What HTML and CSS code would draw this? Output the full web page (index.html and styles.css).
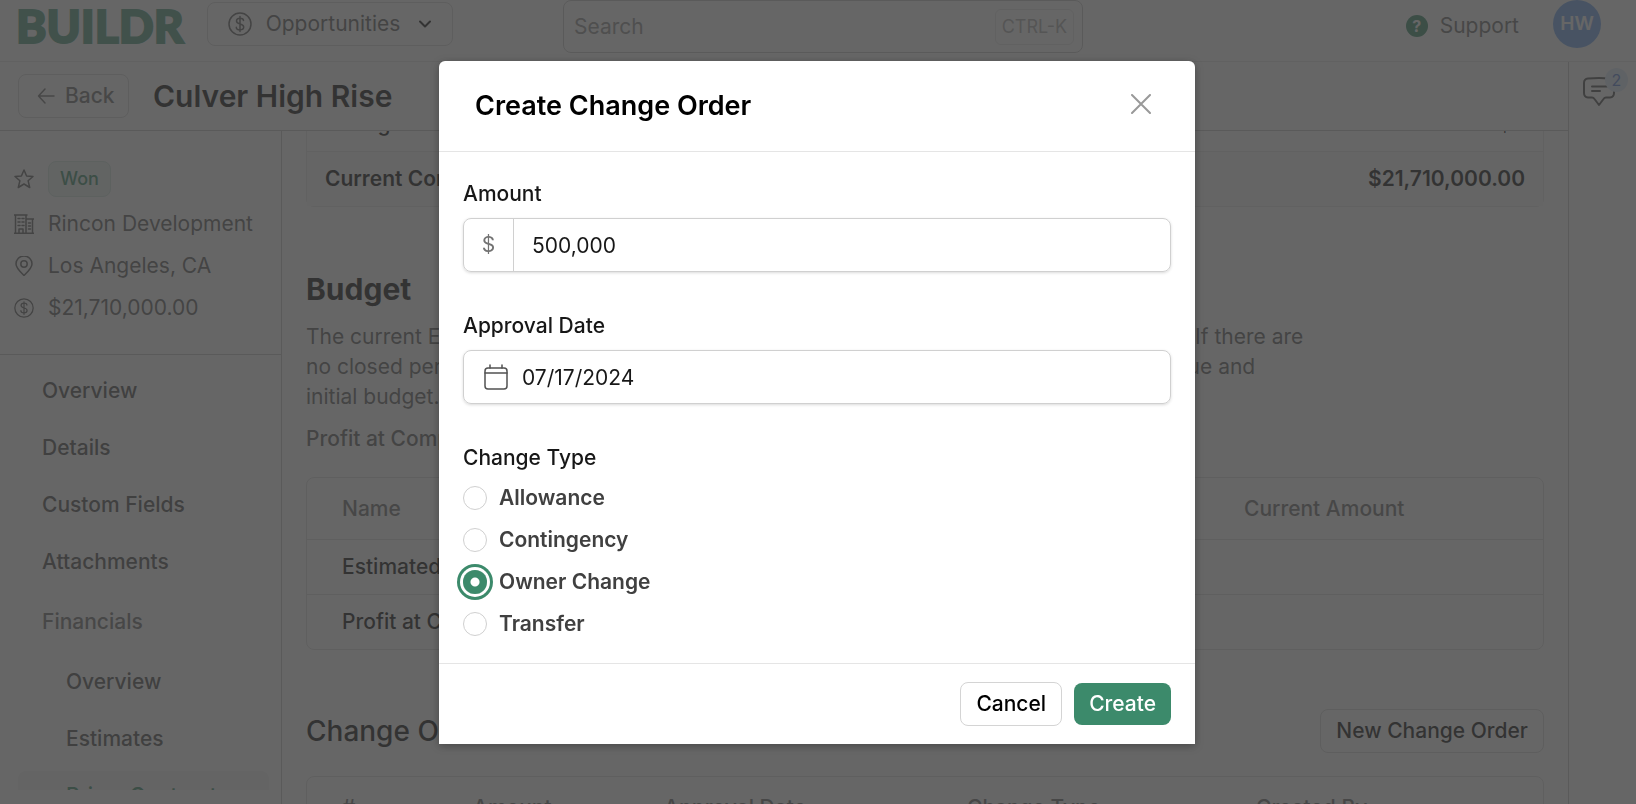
FILE: index.html
```
<!DOCTYPE html>
<html lang="en">
<head>
  <meta charset="UTF-8">
  <meta name="viewport" content="width=device-width, initial-scale=1.0">
  <title>Culver High Rise - Buildr</title>
  <link rel="stylesheet" href="styles.css">
</head>
<body>
  <div class="app">
    <header class="topbar">
      <a class="logo" href="#">BUILDR</a>
      <button class="btn switcher" type="button">
        <svg width="24" height="24" viewBox="0 0 24 24"><circle cx="12" cy="12" r="11"/><path d="M12 4.500v15M15.500 8.500c0-1.500-1.500-2.300-3.500-2.300s-3.500 1-3.500 2.800c0 4 7.200 2 7.200 6 0 1.800-1.500 2.800-3.700 2.800s-3.700-1-3.700-2.600"/></svg>
        Opportunities
        <svg class="chevron" width="14" height="14" viewBox="0 0 14 14"><path d="M2 4.500l5 5 5-5"/></svg>
      </button>
      <div class="search">
        <input type="text" placeholder="Search" aria-label="Search">
        <kbd>CTRL-K</kbd>
      </div>
      <a class="support" href="#"><span class="help">?</span>Support</a>
      <button class="avatar" type="button">HW</button>
    </header>

    <div class="below">
      <div class="page">
        <div class="titlebar">
          <button class="btn back" type="button">
            <svg width="18" height="18" viewBox="0 0 18 18"><path d="M17 9H1.500M8 2L1.500 9 8 16"/></svg>
            Back
          </button>
          <h1>Culver High Rise</h1>
        </div>

        <div class="columns">
          <aside class="sidebar">
            <ul class="info">
              <li class="status">
                <svg width="20" height="20" viewBox="0 0 20 20"><path d="M10 1l2.600 6 6.400.500-4.900 4.200 1.600 6.800L10 15l-5.700 3.500 1.600-6.800L1 7.500 7.400 7z"/></svg>
                <span class="pill">Won</span>
              </li>
              <li>
                <svg width="20" height="20" viewBox="0 0 20 20"><path d="M0 19.300h20M1.500 19V1M0 1h13M12 1v18M12 5h8M18.500 5v14M5 19v-4h4v4M4 4.500h2M8 4.500h2M4 8h2M8 8h2M4 11.500h2M8 11.500h2M14.500 9h2M14.500 12h2M14.500 15h2"/></svg>
                Rincon Development
              </li>
              <li>
                <svg width="20" height="20" viewBox="0 0 20 20"><path d="M10 19.500C6 15.500 2 12 2 8a8 8 0 0 1 16 0c0 4-4 7.500-8 11.500z"/><circle cx="10" cy="8" r="3.200"/></svg>
                Los Angeles, CA
              </li>
              <li>
                <svg width="20" height="20" viewBox="0 0 24 24"><circle cx="12" cy="12" r="11"/><path d="M12 4.500v15M15.500 8.500c0-1.500-1.500-2.300-3.500-2.300s-3.500 1-3.500 2.800c0 4 7.200 2 7.200 6 0 1.800-1.500 2.800-3.700 2.800s-3.700-1-3.700-2.600"/></svg>
                $21,710,000.00
              </li>
            </ul>
            <nav class="nav">
              <a href="#">Overview</a>
              <a href="#">Details</a>
              <a href="#">Custom Fields</a>
              <a href="#">Attachments</a>
              <span class="group">Financials</span>
              <a class="sub" href="#">Overview</a>
              <a class="sub" href="#">Estimates</a>
              <a class="sub active" href="#">Prime Contract</a>
            </nav>
          </aside>

          <main class="content">
            <table class="totals">
              <tr><td>Change Orders</td><td>$0</td></tr>
              <tr class="total"><td>Current Contract</td><td>$21,710,000.00</td></tr>
            </table>

            <h2>Budget</h2>
            <p class="text">The current Estimated Cost and Profit are both taken from the most recent closed period. If there are<br>
              no closed periods, the figures shown here are calculated from the original contract revenue and<br>
              initial budget.</p>
            <p class="note">Profit at Completion</p>

            <table class="grid budget">
              <thead>
                <tr><th>Name</th><th>Current Amount</th></tr>
              </thead>
              <tbody>
                <tr><td>Estimated Cost</td><td></td></tr>
                <tr><td>Profit at Completion</td><td></td></tr>
              </tbody>
            </table>

            <div class="section-head">
              <h3>Change Orders</h3>
              <button class="btn new-order" type="button">New Change Order</button>
            </div>

            <table class="grid orders">
              <thead>
                <tr><th>#</th><th>Amount</th><th>Approval Date</th><th>Change Type</th><th>Created By</th></tr>
              </thead>
            </table>
          </main>
        </div>
      </div>

      <aside class="rail">
        <button class="comments" type="button" aria-label="Comments">
          <svg width="32" height="30" viewBox="0 0 32 30"><path d="M5 1.500Q16 .500 27 1.500q4 .500 4 4.500v10q0 4-4 4.500h-4q-1.500 0-2.500 1.500L16 28l-4.500-6q-1-1.500-2.500-1.500H5q-4-.500-4-4.500V6q0-4 4-4.500zM9 9.500h15M9 14h8"/></svg>
          <span class="badge">2</span>
        </button>
      </aside>
    </div>
  </div>

  <div class="backdrop">
    <form class="modal" role="dialog" aria-labelledby="modal-title">
      <div class="modal-header">
        <h2 id="modal-title">Create Change Order</h2>
        <button class="close" type="button" aria-label="Close">
          <svg width="20" height="20" viewBox="0 0 20 20"><path d="M1 1l18 18M19 1L1 19"/></svg>
        </button>
      </div>

      <div class="modal-body">
        <div class="field">
          <label for="amount">Amount</label>
          <div class="input-group">
            <span class="prefix">$</span>
            <input id="amount" type="text" value="500,000">
          </div>
        </div>
        <div class="field">
          <label for="date">Approval Date</label>
          <div class="input-group date">
            <svg width="24" height="26" viewBox="0 0 24 26"><rect x="1" y="4" width="22" height="21" rx="3"/><path d="M1 9h22M6 1v3M18 1v3"/></svg>
            <input id="date" type="text" value="07/17/2024">
          </div>
        </div>
        <fieldset>
          <legend>Change Type</legend>
          <label><input type="radio" name="type"> Allowance</label>
          <label><input type="radio" name="type"> Contingency</label>
          <label><input type="radio" name="type" checked> Owner Change</label>
          <label><input type="radio" name="type"> Transfer</label>
        </fieldset>
      </div>

      <div class="modal-footer">
        <button class="btn cancel" type="button">Cancel</button>
        <button class="btn create" type="submit">Create</button>
      </div>
    </form>
  </div>
</body>
</html>
```
FILE: styles.css
```
* { box-sizing: border-box; }
body {
  margin: 0;
  font-family: Inter, "Liberation Sans", sans-serif;
  font-size: 21px;
  line-height: 30px;
  color: #000;
  background: #fff;
  overflow: hidden;
}
h1, h2, h3, p, ul, fieldset { margin: 0; padding: 0; }
button, input { font: inherit; color: inherit; }
button { cursor: pointer; }
a { color: inherit; text-decoration: none; }
svg {
  flex: none;
  fill: none;
  stroke: currentColor;
  stroke-width: 1.5;
  stroke-linecap: round;
  stroke-linejoin: round;
}
.app {
  display: flex;
  flex-direction: column;
  height: 100vh;
}
.btn {
  display: flex;
  align-items: center;
  justify-content: center;
  height: 44px;
  padding: 0 15px;
  border: 1px solid #d4d4d4;
  border-radius: 8px;
  background: #fff;
  font-weight: 500;
}

/* top bar */
.topbar {
  display: flex;
  flex: none;
  align-items: flex-start;
  height: 62px;
  padding: 0 35px 0 16px;
  border-bottom: 1px solid #e5e5e5;
  color: #555;
}
.logo {
  width: 191px;
  font-family: Lato, sans-serif;
  font-size: 46px;
  font-weight: 900;
  line-height: 52px;
  color: #469878;
  -webkit-text-stroke: 2px #469878;
}
.switcher {
  gap: 14px;
  width: 246px;
  margin-top: 2px;
  font-weight: 400;
}
.chevron {
  margin-left: 4px;
  color: #000;
  stroke-width: 2;
}
.search {
  display: flex;
  align-items: center;
  width: 520px;
  height: 53px;
  margin-left: 110px;
  padding: 0 8px 0 10px;
  border: 1px solid #c4c4c4;
  border-radius: 8px;
}
.search input {
  flex: 1;
  min-width: 0;
  padding: 0;
  border: 0;
  outline: 0;
}
.search input::placeholder { color: #8a8a8a; }
.search kbd {
  padding: 2px 6px;
  border: 1px solid #e5e5e5;
  border-radius: 6px;
  font-family: inherit;
  font-size: 18px;
  color: #aaa;
}
.support {
  display: flex;
  align-items: center;
  gap: 12px;
  height: 52px;
  margin-left: auto;
  color: #666;
}
.help {
  width: 22px;
  height: 22px;
  border-radius: 50%;
  background: #2f8562;
  color: #fff;
  font-size: 16px;
  font-weight: 700;
  line-height: 22px;
  text-align: center;
}
.avatar {
  width: 48px;
  height: 48px;
  margin-left: 34px;
  padding: 0;
  border: 0;
  border-radius: 50%;
  background: #6ba2f0;
  color: #fff;
  font-size: 19px;
  font-weight: 600;
}

/* page frame */
.below {
  display: flex;
  flex: 1;
  min-height: 0;
}
.page {
  display: flex;
  flex: 1;
  flex-direction: column;
  min-width: 0;
}
.titlebar {
  display: flex;
  flex: none;
  align-items: center;
  gap: 24px;
  height: 69px;
  padding: 0 18px;
  border-bottom: 1px solid #c4c4c4;
}
.titlebar h1 {
  font-size: 30px;
  font-weight: 600;
}
.back {
  gap: 10px;
  justify-content: flex-start;
  width: 111px;
  padding: 0 0 0 18px;
  color: #666;
}
.columns {
  display: flex;
  flex: 1;
  min-height: 0;
}
.rail {
  width: 68px;
  padding: 15px 14px;
  border-left: 1px solid #c4c4c4;
}
.comments {
  position: relative;
  padding: 0;
  border: 0;
  background: none;
  color: #444;
}
.comments svg {
  display: block;
  stroke-width: 2;
}
.badge {
  position: absolute;
  top: -9px;
  right: -13px;
  width: 23px;
  height: 24px;
  border-radius: 50%;
  background: #dbe8fb;
  color: #4c78d0;
  font-size: 16px;
  line-height: 24px;
}

/* sidebar */
.sidebar {
  display: flex;
  flex: none;
  flex-direction: column;
  width: 282px;
  padding-bottom: 14px;
  border-right: 1px solid #c4c4c4;
}
.info {
  flex: none;
  padding: 23px 14px 25px;
  border-bottom: 1px solid #c4c4c4;
  list-style: none;
  color: #555;
}
.info li {
  display: flex;
  align-items: center;
  gap: 14px;
  height: 42px;
  white-space: nowrap;
}
.info .status { height: 49px; }
.pill {
  padding: 2px 11px;
  border: 1px solid #cfe5dc;
  border-radius: 8px;
  background: #e8f3ef;
  color: #2f8562;
  font-size: 18px;
  font-weight: 500;
}
.nav {
  display: flex;
  flex-direction: column;
  gap: 8px;
  min-height: 0;
  padding: 11px 12px 0 18px;
  overflow: hidden;
  color: #444;
  font-weight: 500;
}
.nav > * {
  flex: none;
  height: 49px;
  padding-left: 24px;
  border-radius: 8px;
  line-height: 49px;
}
.nav .group {
  height: 55px;
  color: #666;
  line-height: 55px;
}
.nav .sub { padding-left: 48px; }
.nav .active {
  background: #f2f2f2;
  color: #2f8562;
}

/* content */
.content {
  flex: 1;
  min-width: 0;
  padding: 0 24px;
  overflow: hidden;
}
table {
  width: 100%;
  border-collapse: separate;
  border-spacing: 0;
}
.totals {
  height: 110px;
  margin-top: -36px;
  border: 1px solid #e5e5e5;
  border-radius: 8px;
}
.totals td {
  height: 55px;
  padding: 0 18px;
  font-weight: 500;
}
.totals td:last-child { text-align: right; }
.totals .total td {
  border-top: 1px solid #e5e5e5;
  background: #fafafa;
  font-weight: 600;
}
.content h2 {
  margin-top: 67px;
  font-size: 30px;
  font-weight: 700;
}
.text {
  margin-top: 18px;
  color: #555;
  white-space: nowrap;
}
.note {
  margin-top: 12px;
  color: #555;
  font-weight: 500;
}
.grid {
  border: 1px solid #dcdcdc;
  border-radius: 8px;
  table-layout: fixed;
}
.grid th, .grid td {
  height: 55px;
  padding: 0 0 0 35px;
  font-weight: 500;
  text-align: left;
}
.grid th {
  height: 61px;
  color: #666;
}
.grid td { border-top: 1px solid #dcdcdc; }
.budget { margin-top: 23px; }
.budget th:last-child { width: 334px; }
.section-head {
  display: flex;
  align-items: center;
  justify-content: space-between;
  margin: 59px 0 23px;
}
.section-head h3 {
  font-size: 28px;
  font-weight: 500;
}
.orders th:nth-child(1) { width: 131px; }
.orders th:nth-child(2) { width: 191px; }
.orders th:nth-child(3) { width: 303px; }
.orders th:nth-child(4) { width: 289px; }

/* modal */
.backdrop {
  position: fixed;
  inset: 0;
  display: flex;
  align-items: flex-start;
  justify-content: center;
  padding: 61px 2px 0 0;
  background: rgba(64, 64, 64, 0.8);
}
.modal {
  width: 756px;
  border-radius: 6px 6px 0 0;
  background: #fff;
  box-shadow: 0 2px 8px rgba(0, 0, 0, 0.3);
}
.modal-header {
  display: flex;
  align-items: center;
  justify-content: space-between;
  height: 91px;
  padding: 0 44px 0 36px;
  border-bottom: 1px solid #e5e5e5;
}
.modal-header h2 {
  font-size: 27px;
  font-weight: 600;
}
.close {
  padding: 0 0 5px;
  border: 0;
  background: none;
  color: #999;
}
.close svg {
  display: block;
  stroke-width: 2;
}
.modal-body {
  padding: 27px 24px 18px;
  color: #171717;
}
.field { margin-bottom: 39px; }
.field > label, legend {
  display: block;
  padding: 0;
  font-weight: 500;
}
.input-group {
  display: flex;
  align-items: center;
  height: 54px;
  margin-top: 9px;
  border: 1px solid #d0d0d0;
  border-radius: 8px;
  box-shadow: 0 1px 3px rgba(0, 0, 0, 0.15);
}
.input-group input {
  flex: 1;
  min-width: 0;
  height: 100%;
  padding: 0 18px;
  border: 0;
  outline: 0;
  background: none;
}
.prefix {
  width: 50px;
  height: 100%;
  border-right: 1px solid #d0d0d0;
  color: #737373;
  line-height: 52px;
  text-align: center;
}
.date { padding-left: 20px; }
.date svg { color: #525252; }
.date input { padding-left: 14px; }
fieldset { border: 0; }
legend { margin-bottom: 4px; }
fieldset label {
  display: flex;
  align-items: center;
  gap: 12px;
  height: 42px;
  color: #404040;
  font-weight: 600;
}
fieldset input {
  appearance: none;
  width: 24px;
  height: 24px;
  margin: 0;
  border: 1px solid #d0d0d0;
  border-radius: 50%;
}
fieldset input:checked {
  border: 0;
  background: radial-gradient(circle, #fff 4px, #3c8a6b 5px);
  box-shadow: 0 0 0 3px #fff, 0 0 0 6px #3c8a6b;
}
.modal-footer {
  display: flex;
  align-items: center;
  justify-content: flex-end;
  gap: 12px;
  height: 81px;
  padding: 0 24px;
  border-top: 1px solid #e5e5e5;
}
.create {
  height: 42px;
  border: 0;
  background: #3c8a6b;
  color: #fff;
}
```
